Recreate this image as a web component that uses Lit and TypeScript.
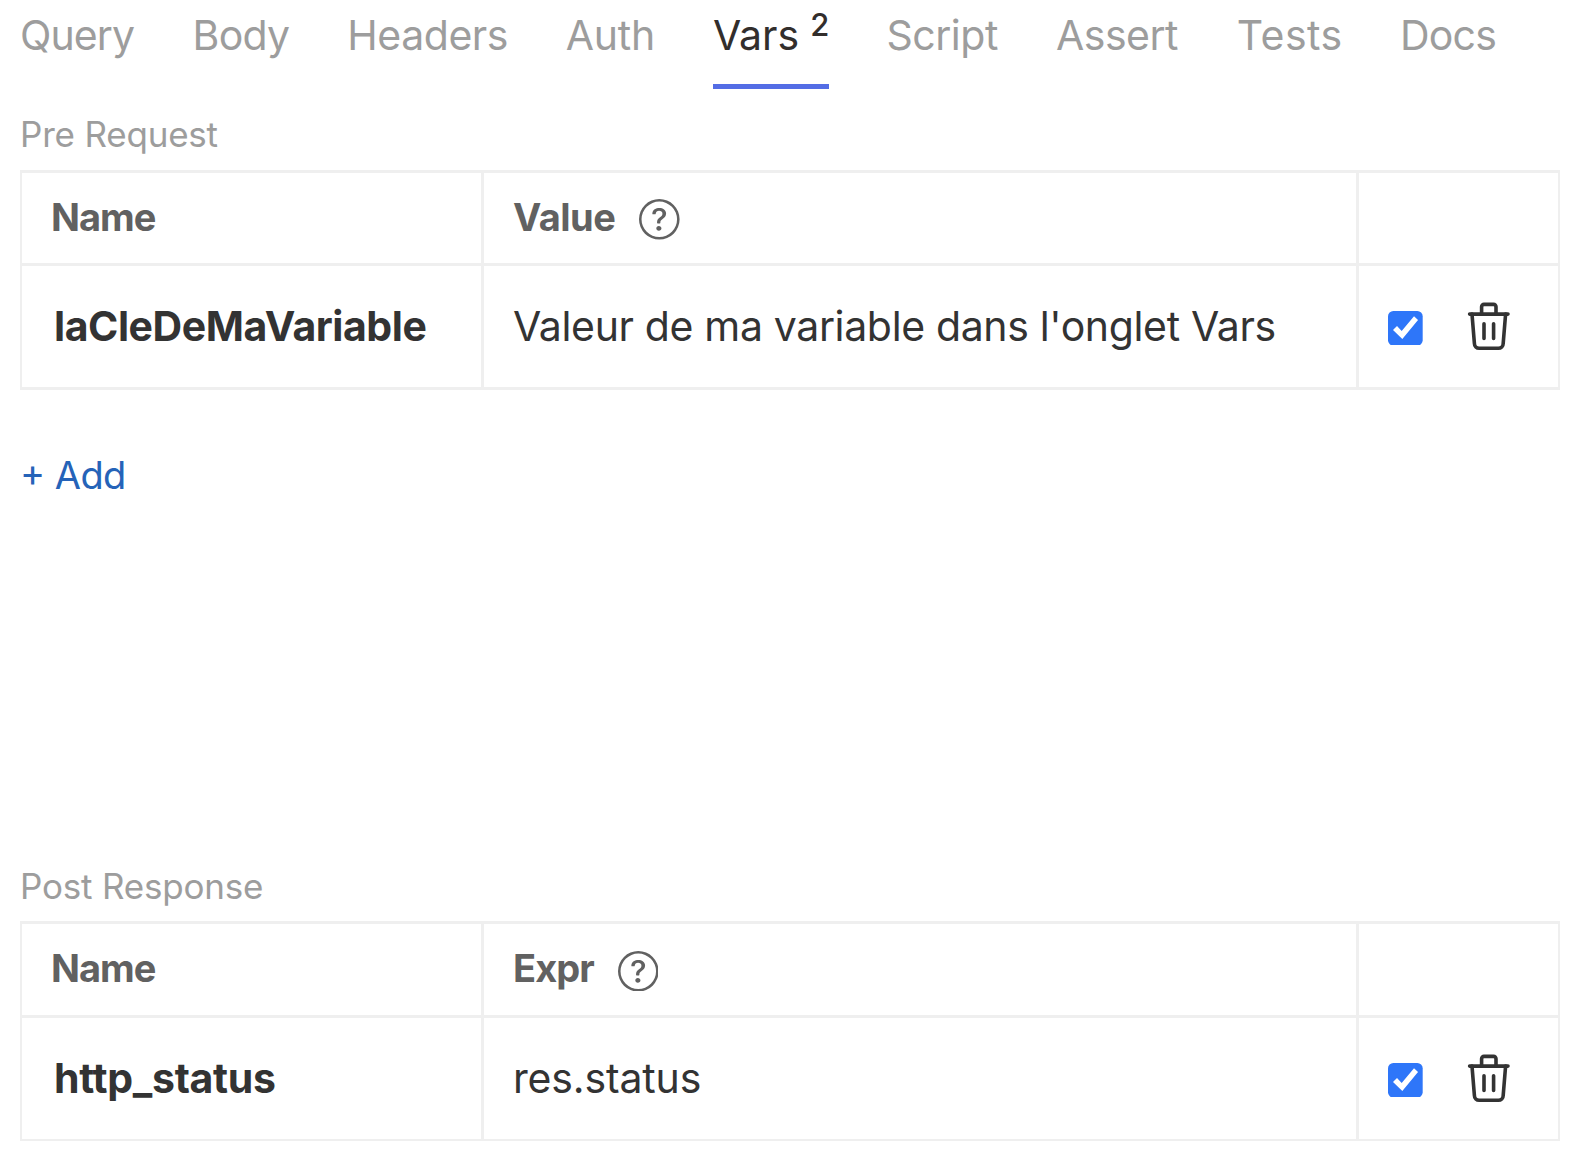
import { LitElement, html, css, svg } from "lit";
import { customElement, property } from "lit/decorators.js";
import { classMap } from "lit/directives/class-map.js";
import { styleMap } from "lit/directives/style-map.js";

interface Label {
  text: string;
  tracking: number;
}

interface Tab extends Label {
  count?: number;
}

const TABS: Tab[] = [
  { text: "Query", tracking: -0.9 },
  { text: "Body", tracking: -0.7 },
  { text: "Headers", tracking: -0.45 },
  { text: "Auth", tracking: -0.2 },
  { text: "Vars", tracking: 0, count: 2 },
  { text: "Script", tracking: -0.45 },
  { text: "Assert", tracking: -0.5 },
  { text: "Tests", tracking: 0.5 },
  { text: "Docs", tracking: -0.8 },
];

const tracked = (label: Label) => styleMap({ letterSpacing: `${label.tracking}px` });

const helpIcon = svg`
  <path d="M8 15A7 7 0 1 1 8 1a7 7 0 0 1 0 14zm0 1A8 8 0 1 0 8 0a8 8 0 0 0 0 16z" />
  <path d="M5.255 5.786a.237.237 0 0 0 .241.247h.825c.138 0 .248-.113.266-.25.09-.656.54-1.134 1.342-1.134.686 0 1.314.343 1.314 1.168 0 .635-.374.927-.965 1.371-.673.489-1.206 1.06-1.168 1.987l.003.217a.25.25 0 0 0 .25.246h.811a.25.25 0 0 0 .25-.25v-.105c0-.718.273-.927 1.01-1.486.609-.463 1.244-.977 1.244-2.056 0-1.511-1.276-2.241-2.673-2.241-1.267 0-2.655.59-2.75 2.286zm1.557 5.763c0 .533.425.927 1.01.927.609 0 1.028-.394 1.028-.927 0-.552-.42-.94-1.029-.94-.584 0-1.009.388-1.009.94z" />
`;

@customElement("vars-table")
export class VarsTable extends LitElement {
  static styles = css`
    :host {
      display: block;
    }
    .table {
      display: grid;
      grid-template-columns: 459px 872px 199px;
      grid-template-rows: var(--head-height, 90px) 121px;
      gap: 3px;
      box-sizing: border-box;
      width: 1540px;
      border: 2px solid #efefef;
      border-top-width: 3px;
      border-bottom-width: var(--table-bottom, 3px);
      background: #efefef;
    }
    .cell {
      display: flex;
      align-items: center;
      box-sizing: border-box;
      background: #fff;
      padding: 0 0 1px 29px;
      white-space: pre;
      color: #333;
      font-size: 41px;
      line-height: 50px;
    }
    .head {
      color: #616161;
      font-size: 38px;
      font-weight: 700;
      line-height: 46px;
      padding-bottom: 3px;
    }
    .title {
      letter-spacing: -1px;
    }
    .key {
      font-weight: 700;
      padding-left: 32px;
    }
    .help {
      width: 40.6px;
      height: 40.6px;
      margin: 6px 0 0 24px;
      fill: #616161;
    }
    .box {
      display: block;
      width: 34.7px;
      height: 34.7px;
      margin-top: 4px;
    }
    .trash {
      width: 57.6px;
      height: 58.6px;
      margin: 1px 0 0 37.3px;
      fill: none;
      stroke: #333;
      stroke-width: 1.5;
      stroke-linecap: round;
      stroke-linejoin: round;
    }
  `;

  @property({ attribute: false }) name!: Label;
  @property({ attribute: false }) valueTitle!: Label;
  @property({ attribute: false }) value!: Label;

  render() {
    return html`
      <div class="table">
        <div class="cell head"><span class="title">Name</span></div>
        <div class="cell head">
          <span style=${tracked(this.valueTitle)}>${this.valueTitle.text}</span
          ><svg class="help" viewBox="0 0 16 16">${helpIcon}</svg>
        </div>
        <div class="cell head"></div>
        <div class="cell key"><span style=${tracked(this.name)}>${this.name.text}</span></div>
        <div class="cell"><span style=${tracked(this.value)}>${this.value.text}</span></div>
        <div class="cell"
          ><svg class="box" viewBox="0 0 104 104">
            <rect width="104" height="104" rx="16" fill="#2e76f9" />
            <path d="M15 57 27 45 41 60 78 16 90 27 43 84Z" fill="#fff" /></svg
          ><svg class="trash" viewBox="0 0 24 24" preserveAspectRatio="none">
            <path d="M4 7h16M10 11v6M14 11v6" />
            <path d="M5 7l1 12a2 2 0 0 0 2 2h8a2 2 0 0 0 2 -2l1 -12" />
            <path d="M9 7v-3a1 1 0 0 1 1 -1h4a1 1 0 0 1 1 1v3" /></svg
        ></div>
      </div>
    `;
  }
}

@customElement("app-root")
export class AppRoot extends LitElement {
  static styles = css`
    :host {
      display: block;
      box-sizing: border-box;
      width: 1576px;
      height: 1160px;
      padding: 10px 16px 0 20px;
      overflow: hidden;
      background: #fff;
      font-family: Inter, "Liberation Sans", sans-serif;
      color: #333;
    }
    .tabs {
      display: grid;
      grid-template-columns: 172.5px 154.8px 218.4px 147.2px 173.5px 169.6px 180.8px 163.2px 110px;
      height: 79px;
      font-size: 41px;
      line-height: 50px;
      color: #9d9d9d;
    }
    .tab {
      display: flex;
      align-items: flex-start;
      justify-self: start;
      box-sizing: border-box;
      border-bottom: 5px solid transparent;
    }
    .active {
      width: 116px;
      color: #322e2c;
      border-color: #546de5;
    }
    .count {
      margin: -4px 0 0 11px;
      font-size: 31px;
      font-weight: 500;
      line-height: 38px;
    }
    .caption {
      box-sizing: border-box;
      height: 81px;
      padding-top: 24px;
      font-size: 35px;
      line-height: 42px;
      letter-spacing: -0.2px;
      color: #9d9d9d;
      white-space: pre;
    }
    .panel {
      height: 752px;
    }
    .panel:last-child {
      --table-bottom: 2px;
      --head-height: 91px;
      height: 319px;
    }
    .panel:last-child .caption {
      height: 80px;
    }
    .add {
      margin-top: 62px;
      font-size: 38px;
      line-height: 46px;
      letter-spacing: -0.55px;
      font-feature-settings: "case";
      color: #2563b8;
      white-space: pre;
    }
  `;

  render() {
    return html`
      <nav class="tabs">
        ${TABS.map(
          (tab) => html`<div class=${classMap({ tab: true, active: tab.count !== undefined })}
            ><span style=${tracked(tab)}>${tab.text}</span>${tab.count
              ? html`<span class="count">${tab.count}</span>`
              : ""}</div
          >`
        )}
      </nav>
      <section class="panel">
        <div class="caption">Pre Request</div>
        <vars-table
          .name=${{ text: "laCleDeMaVariable", tracking: -0.45 }}
          .valueTitle=${{ text: "Value", tracking: -0.5 }}
          .value=${{ text: "Valeur de ma variable dans l'onglet Vars", tracking: -0.35 }}
        ></vars-table>
        <div class="add">+ Add</div>
      </section>
      <section class="panel">
        <div class="caption">Post Response</div>
        <vars-table
          .name=${{ text: "http_status", tracking: -0.3 }}
          .valueTitle=${{ text: "Expr", tracking: -0.95 }}
          .value=${{ text: "res.status", tracking: -0.15 }}
        ></vars-table>
      </section>
    `;
  }
}
